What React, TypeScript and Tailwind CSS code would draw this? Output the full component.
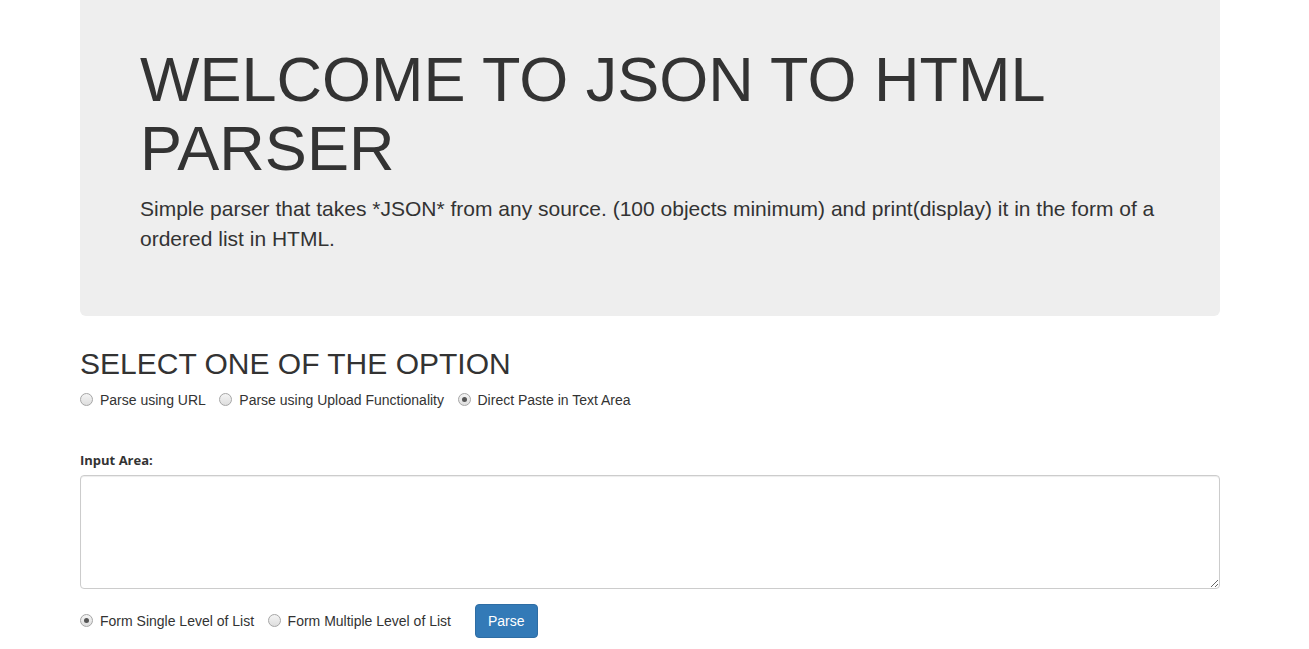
import React from "react";

function Radio({ checked, label }: { checked?: boolean; label: string }) {
  return (
    <label className="inline-flex items-center h-5 text-[14px] leading-5 text-[#333]">
      <span className="relative w-[13px] h-[13px] rounded-full border border-[#a6a6a6] bg-gradient-to-b from-[#f4f4f4] to-[#dedede] flex items-center justify-center mr-[7px]">
        {checked && <span className="w-[5px] h-[5px] rounded-full bg-[#555]"></span>}
      </span>
      <span>{label}</span>
    </label>
  );
}

export default function App() {
  return (
    <div className="min-h-screen bg-white text-[#333] font-['Liberation_Sans',Arial,sans-serif]">
      <div className="ml-[80px] w-[1140px]">
        {/* Jumbotron */}
        <div className="bg-[#eeeeee] rounded-b-[6px] px-[60px] pt-[25px] pb-[47.5px]">
          <h1 className="mt-5 mb-[10px] text-[63px] leading-[1.1] font-normal">
            WELCOME TO JSON TO HTML PARSER
          </h1>
          <p className="mb-[15px] text-[21px] leading-[30px]">
            Simple parser that takes *JSON* from any source. (100 objects minimum) and print(display) it in the form of a ordered list in HTML.
          </p>
        </div>

        <h2 className="mt-[30.5px] mb-[10px] text-[30px] leading-[33px] font-normal">SELECT ONE OF THE OPTION</h2>
        <div className="flex items-center gap-[13.5px]">
          <Radio label="Parse using URL" />
          <Radio label="Parse using Upload Functionality" />
          <Radio checked label="Direct Paste in Text Area" />
        </div>

        <label className="block mt-[40px] mb-[5px] text-[13px] leading-5 font-bold font-['Open_Sans',sans-serif]">
          Input Area:
        </label>
        <textarea className="block w-full h-[114px] border border-[#cccccc] rounded-[4px] shadow-[inset_0_1px_1px_rgba(0,0,0,0.075)] px-3 py-[6px] text-[14px] outline-none"></textarea>

        <div className="flex items-center mt-[15px]">
          <div className="flex items-center gap-[13.5px]">
            <Radio checked label="Form Single Level of List" />
            <Radio label="Form Multiple Level of List" />
          </div>
          <button className="ml-[24px] h-[34px] px-3 bg-[#337ab7] border border-[#2e6da4] rounded-[4px] text-white text-[14px] leading-5">
            Parse
          </button>
        </div>
      </div>
    </div>
  );
}
